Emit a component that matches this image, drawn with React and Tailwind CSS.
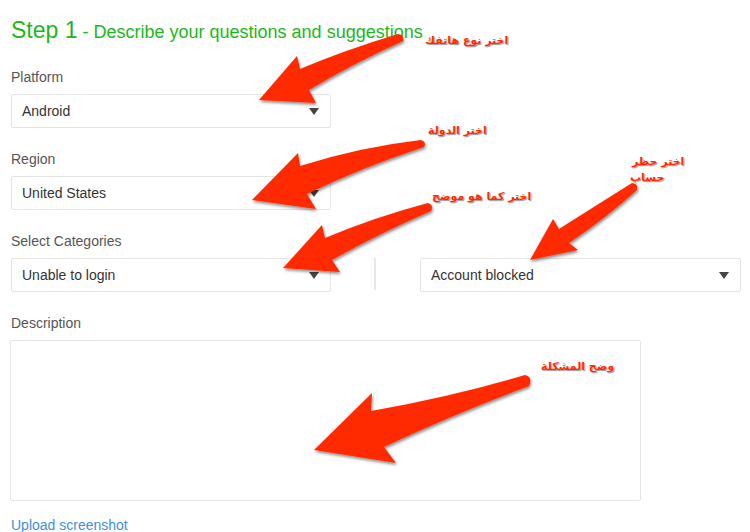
import React from "react";

const arrows = [
  // platform
  "M259,100 L297,56 L300,69 Q345,50 398,34 Q405,35 403,41 Q352,64 309,90 L316,103 Z",
  // region
  "M252,200 L298,153 L300,166 Q360,147 421,140 Q427,142 424,147 Q360,168 307,194 L316,209 Z",
  // categories
  "M283,268 L322,225 L325,238 Q375,217 428,203 Q434,205 431,211 Q380,233 332,260 L340,272 Z",
  // account blocked
  "M530,260 L553,219 L559,229 Q600,203 632,183 Q639,184 637,190 Q606,218 569,243 L578,250 Z",
  // description
  "M314,450 L372,393 L371,411 Q450,397 525,375 Q533,377 529,386 Q452,415 384,447 L396,463 Z",
];

const notes = [
  { text: "اختر نوع هاتفك", left: 425, top: 34 },
  { text: "اختر الدولة", left: 428, top: 124 },
  { text: "اختر كما هو موضح", left: 432, top: 190 },
  { text: "اختر حظر", left: 632, top: 155 },
  { text: "حساب", left: 630, top: 171 },
  { text: "وضح المشكلة", left: 541, top: 360 },
];

function Caret() {
  return (
    <svg width="10" height="7" viewBox="0 0 10 7" className="shrink-0">
      <path d="M0,0 L10,0 L5,7 Z" fill="#444" />
    </svg>
  );
}

function SelectBox({ value, width = "w-[320px]" }) {
  return (
    <div
      className={`${width} h-[34px] border border-[#e4e4e4] rounded-[2px] flex items-center justify-between pl-[10px] pr-[11px] text-sm text-[#333]`}
    >
      <span>{value}</span>
      <Caret />
    </div>
  );
}

function Label({ children, className = "" }) {
  return (
    <div className={`text-sm leading-5 text-[#555] ${className}`}>{children}</div>
  );
}

export default function App() {
  return (
    <div className="relative w-[750px] h-[532px] overflow-hidden bg-white font-['Liberation_Sans',Arial,sans-serif]">
      <div className="flex flex-col pl-[11px] pt-[16px]">
        <h1 className="leading-[28px] text-[#1bb81b] whitespace-nowrap">
          <span className="text-[23px]">Step 1</span>
          <span className="text-[18px]"> - Describe your questions and suggestions</span>
        </h1>

        <Label className="mt-[20px]">Platform</Label>
        <div className="mt-[7px]">
          <SelectBox value="Android" />
        </div>

        <Label className="mt-[21px]">Region</Label>
        <div className="mt-[7px]">
          <SelectBox value="United States" />
        </div>

        <Label className="mt-[21px]">Select Categories</Label>
        <div className="mt-[7px] flex items-start">
          <SelectBox value="Unable to login" />
          <div className="ml-[43px] w-[2px] h-[32px] bg-[#e8e8e8]" />
          <div className="ml-[44px]">
            <SelectBox value="Account blocked" width="w-[321px]" />
          </div>
        </div>

        <Label className="mt-[21px]">Description</Label>
        <div className="mt-[7px] -ml-px w-[631px] h-[161px] border border-[#e4e4e4] rounded-[2px]" />

        <a className="mt-[14px] text-sm leading-5 text-[#3d8fe0] cursor-pointer">
          Upload screenshot
        </a>
      </div>

      <svg
        className="absolute inset-0 pointer-events-none"
        width="750"
        height="532"
        viewBox="0 0 750 532"
      >
        <defs>
          <filter id="shadow" x="-20%" y="-20%" width="140%" height="140%">
            <feDropShadow dx="1" dy="2" stdDeviation="1.5" floodColor="#000" floodOpacity="0.45" />
          </filter>
        </defs>
        {arrows.map((d, i) => (
          <path key={i} d={d} fill="#ff2a00" filter="url(#shadow)" />
        ))}
      </svg>

      {notes.map((n, i) => (
        <span
          key={i}
          dir="rtl"
          style={{ left: n.left, top: n.top }}
          className="absolute whitespace-nowrap text-[11px] leading-[14px] font-bold text-[#ff2a00] font-['DejaVu_Sans',sans-serif] [text-shadow:0_0_1px_#fff,1px_1px_1px_rgba(0,0,0,0.45)]"
        >
          {n.text}
        </span>
      ))}
    </div>
  );
}
